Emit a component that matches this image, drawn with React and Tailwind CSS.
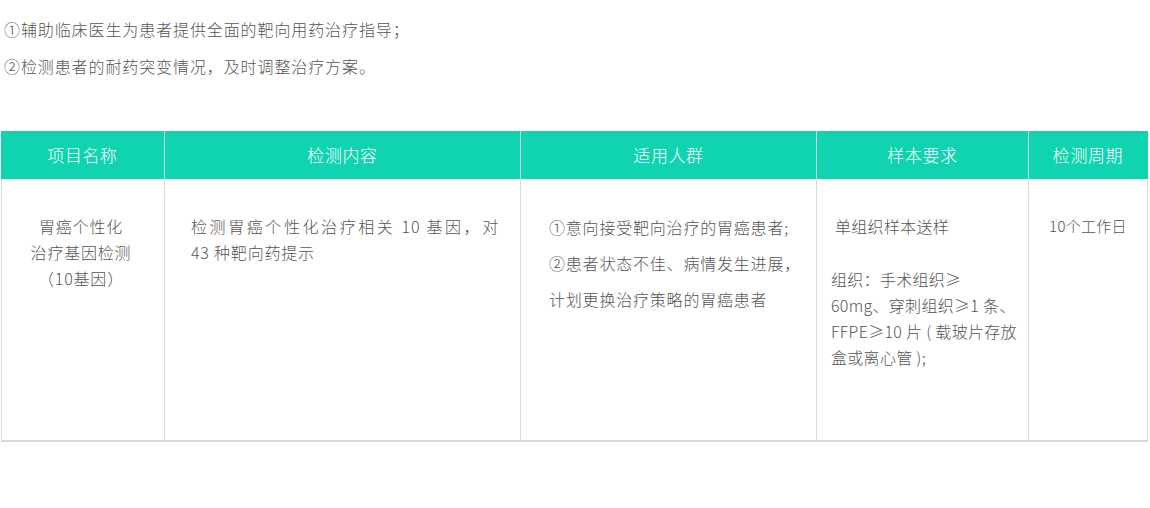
const font = { fontFamily: '"Noto Sans CJK SC", "Noto Sans", sans-serif' };

const cols = [
  { title: "项目名称", w: "w-[163px]" },
  { title: "检测内容", w: "w-[356px]" },
  { title: "适用人群", w: "w-[296px]" },
  { title: "样本要求", w: "w-[212px]" },
  { title: "检测周期", w: "w-[119px]" },
];

export default function App() {
  return (
    <div className="h-[508px] w-[1150px] bg-white font-light text-[#555]" style={font}>
      <div className="px-[4px] pt-[17px] text-[16px] tracking-[0.9px]">
        <p className="leading-[24px]">①辅助临床医生为患者提供全面的靶向用药治疗指导；</p>
        <p className="mt-[13px] leading-[24px]">②检测患者的耐药突变情况，及时调整治疗方案。</p>
      </div>

      <div className="ml-[1px] mt-[53px] w-[1147px] border-b-2 border-[#d8d8d8]">
        <div className="flex h-[48px] bg-[#10d3b0] text-white">
          {cols.map((c, i) => (
            <div
              key={c.title}
              className={`${c.w} flex items-center justify-center text-[17px] tracking-[0.6px] ${
                i > 0 ? "border-l border-[#cfd8d6]" : ""
              }`}
            >
              {c.title}
            </div>
          ))}
        </div>

        <div className="flex h-[261px] text-[16px] tracking-[0.8px]">
          <div className="w-[163px] border-l border-[#dcdcdc] pr-[4px] pt-[34px] text-center leading-[26px]">
            <p>胃癌个性化</p>
            <p>治疗基因检测</p>
            <p>（10基因）</p>
          </div>
          <div className="w-[356px] border-l border-[#dcdcdc] pl-[26px] pt-[34px] leading-[26px]">
            <p className="w-[308px] [text-align:justify] [text-align-last:justify]">检测胃癌个性化治疗相关 10 基因，对</p>
            <p>43 种靶向药提示</p>
          </div>
          <div className="w-[296px] border-l border-[#dcdcdc] pl-[28px] pt-[30px] leading-[36px]">
            <p>①意向接受靶向治疗的胃癌患者;</p>
            <p>②患者状态不佳、病情发生进展，</p>
            <p>计划更换治疗策略的胃癌患者</p>
          </div>
          <div className="w-[212px] border-l border-[#dcdcdc] pl-[14px] pr-[4px] pt-[34px] leading-[26px] tracking-[0.3px]">
            <p className="pl-[4px]">单组织样本送样</p>
            <p className="mt-[27px]">
              组织：手术组织≥
              <br />
              60mg、穿刺组织≥1 条、
              <br />
              FFPE≥10 片 ( 载玻片存放
              <br />
              盒或离心管 );
            </p>
          </div>
          <div className="w-[120px] border-x border-[#dcdcdc] pt-[34px] text-center text-[15px] leading-[26px] tracking-[0.3px]">
            10个工作日
          </div>
        </div>
      </div>
    </div>
  );
}
